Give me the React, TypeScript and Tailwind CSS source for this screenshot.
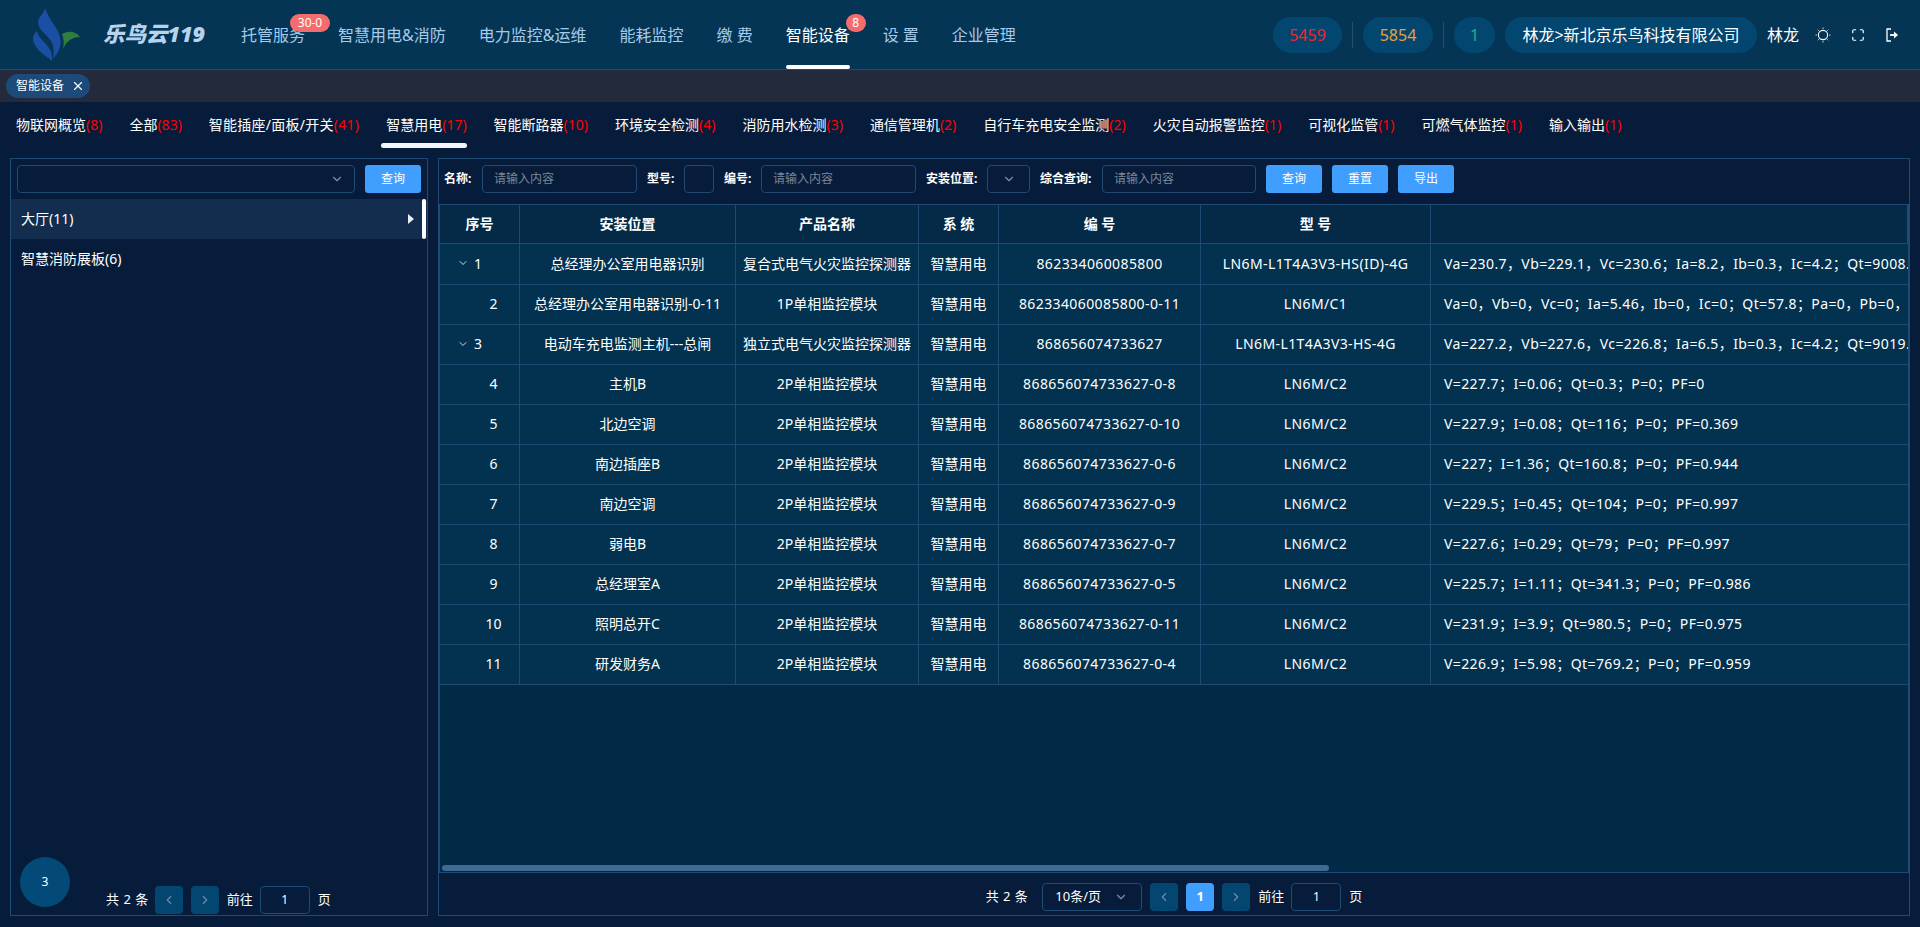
import { ChevronDown, ChevronLeft, ChevronRight, Maximize, X } from 'lucide-react';

const navItems = [
  { label: '托管服务', badge: '30-0', badgeClass: 'left-[49px] w-10' },
  { label: '智慧用电&消防' },
  { label: '电力监控&运维' },
  { label: '能耗监控' },
  { label: '缴 费' },
  { label: '智能设备', badge: '8', badgeClass: 'left-[60px] w-5', active: true },
  { label: '设 置' },
  { label: '企业管理' },
];

const tabs = [
  ['物联网概览', '(8)'],
  ['全部', '(83)'],
  ['智能插座/面板/开关', '(41)'],
  ['智慧用电', '(17)'],
  ['智能断路器', '(10)'],
  ['环境安全检测', '(4)'],
  ['消防用水检测', '(3)'],
  ['通信管理机', '(2)'],
  ['自行车充电安全监测', '(2)'],
  ['火灾自动报警监控', '(1)'],
  ['可视化监管', '(1)'],
  ['可燃气体监控', '(1)'],
  ['输入输出', '(1)'],
];

const rows = [
  { no: 1, open: true, place: '总经理办公室用电器识别', name: '复合式电气火灾监控探测器', code: '862334060085800', model: 'LN6M-L1T4A3V3-HS(ID)-4G', data: 'Va=230.7，Vb=229.1，Vc=230.6；Ia=8.2，Ib=0.3，Ic=4.2；Qt=9008.' },
  { no: 2, place: '总经理办公室用电器识别-0-11', name: '1P单相监控模块', code: '862334060085800-0-11', model: 'LN6M/C1', data: 'Va=0，Vb=0，Vc=0；Ia=5.46，Ib=0，Ic=0；Qt=57.8；Pa=0，Pb=0，' },
  { no: 3, open: true, place: '电动车充电监测主机---总闸', name: '独立式电气火灾监控探测器', code: '868656074733627', model: 'LN6M-L1T4A3V3-HS-4G', data: 'Va=227.2，Vb=227.6，Vc=226.8；Ia=6.5，Ib=0.3，Ic=4.2；Qt=9019.' },
  { no: 4, place: '主机B', name: '2P单相监控模块', code: '868656074733627-0-8', model: 'LN6M/C2', data: 'V=227.7；I=0.06；Qt=0.3；P=0；PF=0' },
  { no: 5, place: '北边空调', name: '2P单相监控模块', code: '868656074733627-0-10', model: 'LN6M/C2', data: 'V=227.9；I=0.08；Qt=116；P=0；PF=0.369' },
  { no: 6, place: '南边插座B', name: '2P单相监控模块', code: '868656074733627-0-6', model: 'LN6M/C2', data: 'V=227；I=1.36；Qt=160.8；P=0；PF=0.944' },
  { no: 7, place: '南边空调', name: '2P单相监控模块', code: '868656074733627-0-9', model: 'LN6M/C2', data: 'V=229.5；I=0.45；Qt=104；P=0；PF=0.997' },
  { no: 8, place: '弱电B', name: '2P单相监控模块', code: '868656074733627-0-7', model: 'LN6M/C2', data: 'V=227.6；I=0.29；Qt=79；P=0；PF=0.997' },
  { no: 9, place: '总经理室A', name: '2P单相监控模块', code: '868656074733627-0-5', model: 'LN6M/C2', data: 'V=225.7；I=1.11；Qt=341.3；P=0；PF=0.986' },
  { no: 10, place: '照明总开C', name: '2P单相监控模块', code: '868656074733627-0-11', model: 'LN6M/C2', data: 'V=231.9；I=3.9；Qt=980.5；P=0；PF=0.975' },
  { no: 11, place: '研发财务A', name: '2P单相监控模块', code: '868656074733627-0-4', model: 'LN6M/C2', data: 'V=226.9；I=5.98；Qt=769.2；P=0；PF=0.959' },
];

function Logo() {
  return (
    <svg width="48" height="54" viewBox="0 0 48 54" className="shrink-0">
      <path d="M12 0C11 6 5 9 5 14C5 22 13 25 18 33C21 38 21 45 20 51C26 44 29 37 27 29C25 20 16 12 12 0Z" fill="#1a4fa3" />
      <path d="M4 23C0 26 -1 31 1 35C4 43 12 47 19 53C20 46 17 40 12 35C8 31 5 28 4 23Z" fill="#1a4fa3" />
      <path d="M29 26C34 23 42 22 47 29C40 29 34 32 30 41C31 36 31 31 29 26Z" fill="#2f7d3f" />
    </svg>
  );
}

function SunIcon() {
  return (
    <svg width="16" height="16" viewBox="0 0 16 16" fill="none" stroke="white" className="ml-[16px] shrink-0">
      <circle cx="8" cy="8" r="4.6" strokeWidth="1.1" />
      <path d="M8 .6v1.2M8 14.2v1.2M.6 8h1.2M14.2 8h1.2M2.8 2.8l.8.8M12.4 12.4l.8.8M2.8 13.2l.8-.8M12.4 3.6l.8-.8" strokeWidth="1" />
    </svg>
  );
}

function LogoutIcon() {
  return (
    <svg width="14" height="14" viewBox="0 0 14 14" fill="none" stroke="white" className="ml-[20px] shrink-0">
      <path d="M6 1H2v12h4" strokeWidth="1.3" />
      <path d="M5 7h5" strokeWidth="1.8" />
      <path d="M9 3.5L13 7l-4 3.5z" fill="white" stroke="none" />
    </svg>
  );
}

function Pager({ showSize }: { showSize?: boolean }) {
  return (
    <div className="flex items-center text-[13px] text-white">
      <span className="tracking-[0.5px]">共 2 条</span>
      {showSize && (
        <div className="ml-[14px] flex h-7 w-[100px] items-center justify-between rounded border border-[#1e4a74] pl-3 pr-[13px]">
          <span>10条/页</span>
          <ChevronDown size={14} className="text-[#7f8fa3]" />
        </div>
      )}
      <button className={`flex h-7 w-7 items-center justify-center rounded-sm bg-[#03466f] text-[#6f8ba3] ${showSize ? 'ml-2' : 'ml-[6px]'}`}>
        <ChevronLeft size={14} />
      </button>
      {showSize && <span className="ml-2 flex h-7 w-7 items-center justify-center rounded-sm bg-[#409eff] font-bold">1</span>}
      <button className="ml-2 flex h-7 w-7 items-center justify-center rounded-sm bg-[#03466f] text-[#6f8ba3]">
        <ChevronRight size={14} />
      </button>
      <span className="ml-2">前往</span>
      <span className="ml-[7px] flex h-7 w-[50px] items-center justify-center rounded border border-[#1e4a74] text-xs">1</span>
      <span className="ml-2">页</span>
    </div>
  );
}

function TextInput({ className }: { className: string }) {
  return (
    <div className={`flex h-7 items-center rounded border border-[#1e4a74] px-[11px] text-xs text-[#7b8797] ${className}`}>
      请输入内容
    </div>
  );
}

function Btn({ label }: { label: string }) {
  return <button className="h-7 w-14 rounded-[3px] bg-[#409eff] text-xs text-white">{label}</button>;
}

export default function App() {
  return (
    <div className="flex h-screen min-h-[927px] flex-col overflow-hidden bg-[#071c3a] font-['Noto_Sans','Noto_Sans_CJK_SC',sans-serif] text-white">
      {/* top bar */}
      <header className="flex h-[70px] shrink-0 items-center border-b border-[#1e4a74] bg-[#053555] pl-[33px]">
        <Logo />
        <span className="ml-[22px] w-[104px] whitespace-nowrap text-[21.5px] font-black italic text-[#b7d3ee]">乐鸟云119</span>
        <nav className="ml-[34px] flex h-full gap-[33px]">
          {navItems.map((item) => (
            <div key={item.label} className={`relative flex h-full items-center whitespace-nowrap text-base ${item.active ? 'text-white' : 'text-[#a6cbe9]'}`}>
              {item.label}
              {item.badge && (
                <span className={`absolute top-[14px] flex h-[18px] items-center justify-center rounded-[9px] bg-[#f56c6c] text-xs text-white ${item.badgeClass}`}>
                  {item.badge}
                </span>
              )}
              {item.active && <span className="absolute bottom-0 left-0 right-0 h-1 rounded-sm bg-white" />}
            </div>
          ))}
        </nav>
        <div className="ml-auto flex items-center pr-[21px] text-sm">
          <span className="flex h-9 w-[69px] items-center justify-center rounded-[18px] bg-[#03466f] text-base text-[#f5222d]">5459</span>
          <span className="mx-[10px] h-[26px] w-px bg-[#24506f]" />
          <span className="flex h-9 w-[70px] items-center justify-center rounded-[18px] bg-[#03466f] text-base text-[#e6a23c]">5854</span>
          <span className="mx-[10px] h-[26px] w-px bg-[#24506f]" />
          <span className="flex h-9 w-[41px] items-center justify-center rounded-[18px] bg-[#03466f] text-base text-[#13b58f]">1</span>
          <span className="ml-[10px] flex h-9 w-[252px] items-center justify-center whitespace-nowrap rounded-[18px] bg-[#03466f] text-base">林龙&gt;新北京乐鸟科技有限公司</span>
          <span className="ml-[10px] text-base">林龙</span>
          <SunIcon />
          <Maximize size={14} strokeWidth={2} className="ml-[20px]" />
          <LogoutIcon />
        </div>
      </header>

      {/* open tags */}
      <div className="flex h-8 shrink-0 items-center bg-[#222a3b] pl-[6px]">
        <span className="flex h-6 w-[84px] items-center rounded-xl bg-[#1d4a78] pl-[10px] text-xs">
          智能设备
          <X size={14} className="ml-[7px]" />
        </span>
      </div>

      {/* device tabs */}
      <div className="flex h-[46px] shrink-0 gap-[27px] pl-4 pt-[12px] text-[14px]">
        {tabs.map(([name, count]) => {
          const active = name === '智慧用电';
          return (
            <div key={name} className={`relative h-[34px] whitespace-nowrap leading-[22px] ${name.includes('/') ? 'tracking-[0.25px]' : ''}`}>
              {name}
              <span className="text-[#ff0000]">{count}</span>
              {active && <span className="absolute bottom-0 left-[-5px] right-0 h-[5px] rounded-sm bg-[#f2f5fa]" />}
            </div>
          );
        })}
      </div>

      {/* content */}
      <div className="flex min-h-0 flex-1 gap-[10px] px-[10px] pb-[11px] pt-[10px]">
        {/* left tree */}
        <aside className="relative flex w-[418px] shrink-0 flex-col border border-[#1e4a74]">
          <div className="flex items-center gap-[10px] pl-[6px] pr-[6px] pt-[6px]">
            <div className="flex h-7 w-[338px] items-center justify-end rounded border border-[#1e4a74] pr-[10px] text-[#7f8fa3]">
              <ChevronDown size={14} />
            </div>
            <Btn label="查询" />
          </div>
          <div className="relative mt-[6px] flex h-10 items-center bg-[#122d4e] pb-[2px] pl-[10px] text-[14px]">
            大厅(11)
            <span className="absolute left-[397px] top-[15px] h-0 w-0 border-y-[5px] border-l-[6px] border-y-transparent border-l-[#e8eef5]" />
            <span className="absolute right-[1px] top-0 h-10 w-1 rounded bg-white" />
          </div>
          <div className="flex h-10 items-center pb-[2px] pl-[10px] text-[14px]">智慧消防展板(6)</div>
          <div className="mt-auto flex h-[29px] items-start pl-[95px]">
            <Pager />
          </div>
          <span className="absolute bottom-[8px] left-[9px] flex h-[50px] w-[50px] items-center justify-center rounded-full bg-[#034a78] text-xs">3</span>
        </aside>

        {/* right table */}
        <main className="flex min-w-0 flex-1 flex-col border border-[#1e4a74]">
          <div className="flex h-[45px] shrink-0 items-start pl-[5px] pt-[6px] text-xs leading-7">
            <b className="w-[38px] font-bold">名称:</b>
            <TextInput className="w-[155px]" />
            <b className="ml-[10px] w-[37px] font-bold">型号:</b>
            <div className="h-7 w-[30px] rounded border border-[#1e4a74]" />
            <b className="ml-[10px] w-[37px] font-bold">编号:</b>
            <TextInput className="w-[155px]" />
            <b className="ml-[10px] w-[61px] font-bold">安装位置:</b>
            <div className="flex h-7 w-[43px] items-center justify-center rounded border border-[#1e4a74] text-[#7f8fa3]">
              <ChevronDown size={14} />
            </div>
            <b className="ml-[10px] w-[62px] font-bold">综合查询:</b>
            <TextInput className="w-[154px]" />
            <div className="ml-[10px] flex gap-[10px]">
              <Btn label="查询" />
              <Btn label="重置" />
              <Btn label="导出" />
            </div>
          </div>

          <div className="relative min-h-0 flex-1 overflow-hidden border border-[#1e4a74] bg-[#022a47]">
            <table className="w-full table-fixed border-separate border-spacing-0 text-[14px]">
              <colgroup>
                <col className="w-[80px]" />
                <col className="w-[216px]" />
                <col className="w-[183px]" />
                <col className="w-[80px]" />
                <col className="w-[202px]" />
                <col className="w-[230px]" />
                <col />
              </colgroup>
              <thead>
                <tr className="h-[39px] bg-[#042a47] font-bold">
                  {['序号', '安装位置', '产品名称', '系 统', '编 号', '型 号', ''].map((h, i) => (
                    <th key={i} className="border-b border-r border-[#1e4a74] pb-[2px] font-bold">{h}</th>
                  ))}
                </tr>
              </thead>
              <tbody>
                {rows.map((row) => (
                  <tr key={row.no} className={`bg-[#023250] ${row.no === 1 ? 'h-[41px]' : 'h-10'}`}>
                    <td className="border-b border-r border-[#1e4a74] pb-[2px]">
                      {row.open ? (
                        <div className="flex items-center justify-center pr-5">
                          <ChevronDown size={12} strokeWidth={1.6} className="mr-[5px]" />
                          {row.no}
                        </div>
                      ) : (
                        <div className="flex justify-center pl-7">{row.no}</div>
                      )}
                    </td>
                    <td className="whitespace-nowrap border-b border-r border-[#1e4a74] pb-[2px] text-center">{row.place}</td>
                    <td className="whitespace-nowrap border-b border-r border-[#1e4a74] pb-[2px] text-center">{row.name}</td>
                    <td className="whitespace-nowrap border-b border-r border-[#1e4a74] pb-[2px] text-center">智慧用电</td>
                    <td className="whitespace-nowrap border-b border-r border-[#1e4a74] pb-[2px] text-center tracking-[0.4px]">{row.code}</td>
                    <td className="whitespace-nowrap border-b border-r border-[#1e4a74] pb-[2px] text-center tracking-[0.4px]">{row.model}</td>
                    <td className="overflow-hidden whitespace-nowrap border-b border-[#1e4a74] pb-[2px] pl-[13px] tracking-[0.4px]">{row.data}</td>
                  </tr>
                ))}
              </tbody>
            </table>
            <span className="absolute bottom-px left-[2px] h-[6px] w-[887px] rounded bg-[#3f6a94]" />
          </div>

          <div className="flex h-[42px] shrink-0 items-start justify-center pt-[10px]">
            <Pager showSize />
          </div>
        </main>
      </div>
    </div>
  );
}
